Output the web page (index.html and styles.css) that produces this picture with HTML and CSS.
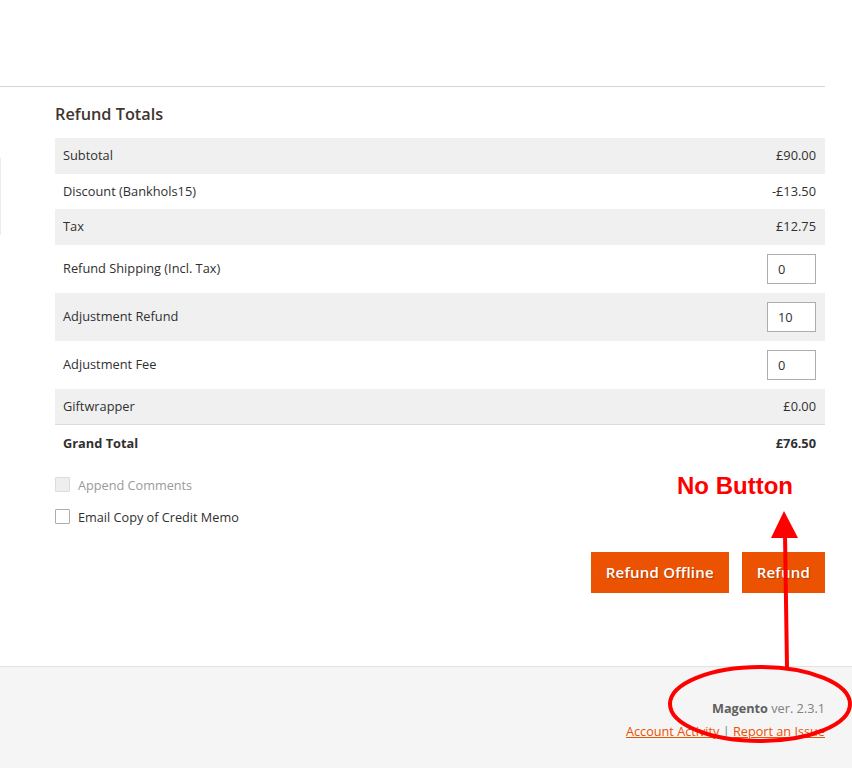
FILE: index.html
```html
<!DOCTYPE html>
<html lang="en">
<head>
<meta charset="utf-8">
<title>Refund Totals</title>
<link rel="stylesheet" href="styles.css">
</head>
<body>
<div class="page">
  <div class="top-area"></div>
  <div class="main">
    <aside class="left-edge"><div class="edge-line"></div></aside>
    <section class="totals">
      <h2 class="title">Refund Totals</h2>
      <table class="totals-table">
        <tbody>
          <tr class="shade"><td>Subtotal</td><td class="amt">£90.00</td></tr>
          <tr><td>Discount (Bankhols15)</td><td class="amt">-£13.50</td></tr>
          <tr class="shade"><td>Tax</td><td class="amt">£12.75</td></tr>
          <tr class="inrow"><td>Refund Shipping (Incl. Tax)</td><td class="amt"><input class="num" type="text" value="0"></td></tr>
          <tr class="inrow shade"><td>Adjustment Refund</td><td class="amt"><input class="num" type="text" value="10"></td></tr>
          <tr class="inrow"><td>Adjustment Fee</td><td class="amt"><input class="num" type="text" value="0"></td></tr>
          <tr class="shade last"><td>Giftwrapper</td><td class="amt">£0.00</td></tr>
          <tr class="grand"><td>Grand Total</td><td class="amt">£76.50</td></tr>
        </tbody>
      </table>
      <div class="options">
        <label class="opt disabled"><span class="box"></span>Append Comments</label>
        <label class="opt"><span class="box"></span>Email Copy of Credit Memo</label>
      </div>
      <div class="actions">
        <button class="btn">Refund Offline</button>
        <button class="btn">Refund</button>
      </div>
    </section>
  </div>
  <footer class="footer">
    <div class="version"><strong>Magento</strong> ver. 2.3.1</div>
    <div class="links"><a href="#">Account Activity</a> <span class="sep">|</span> <a href="#">Report an Issue</a></div>
  </footer>
</div>

<div class="note">No Button</div>
<svg class="annot" width="852" height="768" viewBox="0 0 852 768">
  <line x1="785" y1="534" x2="787" y2="668" stroke="#ff0000" stroke-width="4"/>
  <polygon points="784,511 771,538 798,538" fill="#ff0000"/>
  <ellipse cx="760" cy="704" rx="90" ry="37" fill="none" stroke="#ff0000" stroke-width="4"/>
</svg>
</body>
</html>
```

FILE: styles.css
```css
html, body {
  margin: 0;
  padding: 0;
  height: 100%;
  overflow: hidden;
}
body {
  font-family: "Open Sans", "Noto Sans", sans-serif;
  color: #303030;
  background: #ffffff;
  position: relative;
}
.page {
  display: flex;
  flex-direction: column;
  height: 768px;
}
.top-area {
  height: 86px;
  margin-right: 27px;
  border-bottom: 1px solid #d6d6d6;
  flex: none;
}
.main {
  display: flex;
  flex: none;
}
.left-edge {
  width: 55px;
  flex: none;
}
.edge-line {
  margin-top: 71px;
  height: 77px;
  width: 1px;
  background: #ececec;
}
.totals {
  flex: 1;
  margin-right: 27px;
}
.title {
  margin: 15px 0 12px;
  font-size: 16.3px;
  line-height: 24px;
  font-weight: 600;
  color: #41362f;
}
.totals-table {
  width: 100%;
  border-collapse: collapse;
  font-size: 12.8px;
}
.totals-table td {
  padding: 9px 9px 9px 8px;
  line-height: 17.5px;
  vertical-align: middle;
}
.totals-table td.amt {
  padding-right: 9px;
}
.totals-table tr.inrow td {
  height: 30px;
}
.totals-table tr.shade td {
  background: #f0f0f0;
}
.totals-table tr.last td {
  border-bottom: 1px solid #dcdcdc;
}
.totals-table tr.grand td {
  font-weight: 700;
  padding-top: 10px;
  padding-bottom: 9px;
}
.amt {
  text-align: right;
}
.num {
  box-sizing: border-box;
  width: 49px;
  height: 30px;
  border: 1px solid #adadad;
  padding: 0 10px;
  font-family: inherit;
  font-size: 12.8px;
  color: #303030;
  background: #fff;
  margin: 0;
  vertical-align: middle;
  display: inline-block;
}
.options {
  margin-top: 13px;
  display: flex;
  flex-direction: column;
  gap: 12px;
}
.opt {
  display: flex;
  align-items: center;
  height: 20px;
  font-size: 12.7px;
  color: #303030;
}
.opt .box {
  box-sizing: border-box;
  width: 15px;
  height: 15px;
  border: 1px solid #adadad;
  background: #fff;
  margin-right: 8px;
  border-radius: 1px;
}
.opt.disabled {
  color: #9a9a9a;
}
.opt.disabled .box {
  border-color: #dcdcdc;
  background: #eeeeee;
}
.actions {
  margin-top: 25px;
  display: flex;
  justify-content: flex-end;
  gap: 13px;
}
.btn {
  height: 41px;
  padding: 0 15px;
  border: 0;
  background: #eb5202;
  color: #ffffff;
  font-family: inherit;
  font-size: 15px;
  font-weight: 600;
  letter-spacing: 0.2px;
  text-shadow: 1px 1px 1px rgba(0,0,0,0.25);
}
.footer {
  margin-top: 73px;
  flex: 1;
  border-top: 1px solid #e3e3e3;
  background: #f5f5f5;
  padding: 30px 27px 0 0;
  text-align: right;
  font-size: 12.7px;
  line-height: 23px;
}
.version {
  color: #808080;
}
.version strong {
  color: #606060;
  font-weight: 700;
}
.links a {
  color: #eb5202;
  text-decoration: underline;
}
.links .sep {
  color: #808080;
}
.note {
  position: absolute;
  left: 677px;
  top: 472px;
  font-family: "Liberation Sans", Arial, sans-serif;
  font-weight: 700;
  font-size: 24px;
  line-height: 28px;
  color: #ff0000;
  white-space: nowrap;
}
.annot {
  position: absolute;
  left: 0;
  top: 0;
  pointer-events: none;
}
```
